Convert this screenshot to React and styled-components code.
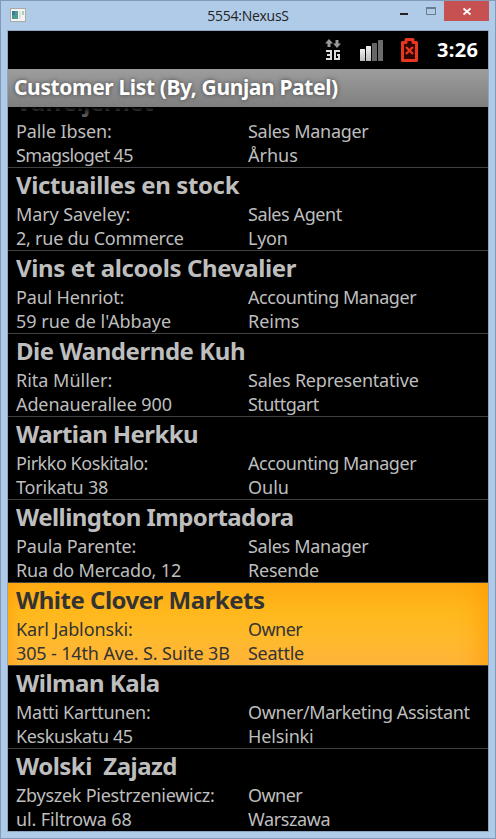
import React from "react";
import styled, { createGlobalStyle, css } from "styled-components";

const Global = createGlobalStyle`
  *, *::before, *::after { box-sizing: border-box; }
  html, body { margin: 0; padding: 0; overflow: hidden; }
`;

const Window = styled.div`
  width: 496px;
  height: 839px;
  border: 1px solid #8299b8;
  background: #b0cbe8;
  padding: 0 6px 6px;
  display: flex;
  flex-direction: column;
  font-family: "Noto Sans", sans-serif;
`;

const TitleBar = styled.header`
  height: 29px;
  flex: none;
  display: grid;
  grid-template-columns: 1fr auto 1fr;
  align-items: start;
`;

const AppIcon = styled.svg`
  display: block;
  margin: 7px 0 0 3px;
`;

const WindowTitle = styled.div`
  font-family: "Open Sans", sans-serif;
  font-size: 14px;
  line-height: 30px;
  letter-spacing: -0.25px;
  color: #222;
`;

const Controls = styled.div`
  display: flex;
  justify-content: flex-end;
`;

const Control = styled.button`
  width: ${(p) => p.$width || 27}px;
  height: 20px;
  padding: 0;
  border: 0;
  display: block;
  background: ${(p) => (p.$close ? "#c75050" : "transparent")};
  svg { display: block; }
`;

const Screen = styled.main`
  width: 482px;
  height: 802px;
  border: 1px solid #8ea5c2;
  background: #000;
  display: flex;
  flex-direction: column;
  overflow: hidden;
`;

const StatusBar = styled.div`
  height: 38px;
  flex: none;
  display: flex;
  justify-content: flex-end;
  padding-right: 8px;
`;

const StatusIcons = styled.svg`
  display: block;
  flex: none;
`;

const Clock = styled.div`
  width: 43px;
  color: #fff;
  font-size: 20px;
  font-weight: 700;
  line-height: 38px;
  letter-spacing: 0.3px;
  white-space: nowrap;
`;

const AppTitle = styled.h1`
  margin: 0;
  height: 38px;
  flex: none;
  padding-left: 6px;
  background: linear-gradient(#9d9d9d, #7f7f7f);
  color: #fff;
  font-size: 21px;
  font-weight: 700;
  line-height: 37px;
  letter-spacing: -0.37px;
  white-space: nowrap;
  text-shadow: 0 0 4px #444;
`;

const List = styled.div`
  flex: 1;
  overflow: hidden;
  position: relative;
  &::before {
    content: "";
    position: absolute;
    inset: 0 0 auto;
    height: 21px;
    background: linear-gradient(#000, #000000bb 4px, transparent);
  }
`;

const Row = styled.section`
  height: 83px;
  padding: 1px 8px 0;
  border-bottom: 1px solid #414141;
  color: #bebebe;
  display: grid;
  grid-template-columns: 232px 1fr;
  grid-template-rows: 33px 24px 24px;
  &:first-child { margin-top: -22px; }
  ${(p) => p.$selected && css`
    color: #333;
    background:
      linear-gradient(to right, #ff980066, transparent 12px),
      linear-gradient(to left, #ff990088, #ff990022 18px, transparent 34px),
      linear-gradient(#ffaa12, #ffb81c 35%, #ffba2b 65%, #ffb338);
  `}
`;

const Company = styled.h2`
  grid-column: 1 / -1;
  margin: 0;
  font-size: 24px;
  font-weight: 700;
  line-height: 32px;
  letter-spacing: ${(p) => p.$spacing || 0}px;
  white-space: pre;
`;

const Field = styled.div`
  font-size: 18px;
  line-height: 24px;
  letter-spacing: ${(p) => p.$spacing || 0}px;
  white-space: nowrap;
`;

// Each row: company, contact, role, street, city, then the tracking of each.
const customers = [
  ["Vaffeljernet", "Palle Ibsen:", "Sales Manager", "Smagsloget 45", "Århus", [-0.4, -0.1, -0.3, -0.62, 0]],
  ["Victuailles en stock", "Mary Saveley:", "Sales Agent", "2, rue du Commerce", "Lyon", [-0.37, -0.1, -0.42, -0.24, -0.25]],
  ["Vins et alcools Chevalier", "Paul Henriot:", "Accounting Manager", "59 rue de l'Abbaye", "Reims", [-0.37, -0.17, -0.45, 0, 0]],
  ["Die Wandernde Kuh", "Rita Müller:", "Sales Representative", "Adenauerallee 900", "Stuttgart", [-0.45, 0, -0.2, -0.1, -0.55]],
  ["Wartian Herkku", "Pirkko Koskitalo:", "Accounting Manager", "Torikatu 38", "Oulu", [-0.6, -0.45, -0.45, -0.2, 0]],
  ["Wellington Importadora", "Paula Parente:", "Sales Manager", "Rua do Mercado, 12", "Resende", [-0.55, -0.15, -0.3, -0.17, -0.2]],
  ["White Clover Markets", "Karl Jablonski:", "Owner", "305 - 14th Ave. S. Suite 3B", "Seattle", [-0.5, -0.12, -0.55, -0.14, -0.3]],
  ["Wilman Kala", "Matti Karttunen:", "Owner/Marketing Assistant", "Keskuskatu 45", "Helsinki", [-0.48, -0.27, -0.4, -0.4, -0.15]],
  ["Wolski  Zajazd", "Zbyszek Piestrzeniewicz:", "Owner", "ul. Filtrowa 68", "Warszawa", [-0.52, -0.26, -0.55, -0.13, -0.4]],
];

export default function App() {
  return (
    <>
      <Global />
      <Window>
        <TitleBar>
          <AppIcon width="16" height="14">
            <rect x=".5" y=".5" width="15" height="13" fill="#f3f4f3" stroke="#a9a9a5" />
            <rect x="2" y="3" width="6" height="8" fill="#4d9a91" />
            <rect x="2" y="3" width="3" height="4" fill="#3b7998" />
            <rect x="9" y="3" width="2" height="8" fill="#dedede" />
            <rect x="12" y="3" width="2" height="4" fill="#a8d0b5" />
          </AppIcon>
          <WindowTitle>5554:NexusS</WindowTitle>
          <Controls>
            <Control aria-label="Minimize">
              <svg width="27" height="20"><rect x="10" y="12" width="8" height="2" fill="#222" /></svg>
            </Control>
            <Control aria-label="Maximize">
              <svg width="27" height="20"><path d="M9 6h10v8H9zM10 8v5h8V8z" fillRule="evenodd" fill="#6d7d91" /></svg>
            </Control>
            <Control $width={45} $close aria-label="Close">
              <svg width="45" height="20"><path d="M19.500 7.500l7 6m0-6l-7 6" stroke="#fff" strokeWidth="1.800" /></svg>
            </Control>
          </Controls>
        </TitleBar>
        <Screen>
          <StatusBar>
            <StatusIcons width="119" height="38">
              <defs>
                <linearGradient id="bar" x1="0" y1="0" x2="0" y2="1">
                  <stop stopColor="#f0f0f0" />
                  <stop offset="1" stopColor="#bbb" />
                </linearGradient>
              </defs>
              <path d="M7 12.500L11 8l4 4.500h-2.500V16h-3v-3.500zM15 12.500l4 4.500 4-4.500h-2.500V9h-3v3.500z" fill="#999" />
              <path d="M8 20h5v8H8M9 24h4M22 20h-5v8h4v-4h-2" fill="none" stroke="#ddd" strokeWidth="2" />
              <rect x="42" y="18" width="5" height="12" rx=".5" fill="url(#bar)" />
              <rect x="48" y="15" width="5" height="15" rx=".5" fill="url(#bar)" />
              <rect x="54" y="12" width="5" height="18" rx=".5" fill="#666" />
              <rect x="60" y="9" width="5" height="21" rx=".5" fill="#6c6c6c" />
              <path d="M84.500 11.500h3.500v-3h7v3h3.500v18h-14z" fill="#300400" stroke="#e8371f" strokeWidth="3" strokeLinejoin="round" />
              <path d="M88 16l7 7m0-7l-7 7" stroke="#e8371f" strokeWidth="2.400" />
            </StatusIcons>
            <Clock>3:26</Clock>
          </StatusBar>
          <AppTitle>Customer List (By, Gunjan Patel)</AppTitle>
          <List>
            {customers.map(([company, name, role, street, city, tracking]) => (
              <Row key={company} $selected={company === "White Clover Markets"}>
                <Company $spacing={tracking[0]}>{company}</Company>
                <Field $spacing={tracking[1]}>{name}</Field>
                <Field $spacing={tracking[2]}>{role}</Field>
                <Field $spacing={tracking[3]}>{street}</Field>
                <Field $spacing={tracking[4]}>{city}</Field>
              </Row>
            ))}
          </List>
        </Screen>
      </Window>
    </>
  );
}
